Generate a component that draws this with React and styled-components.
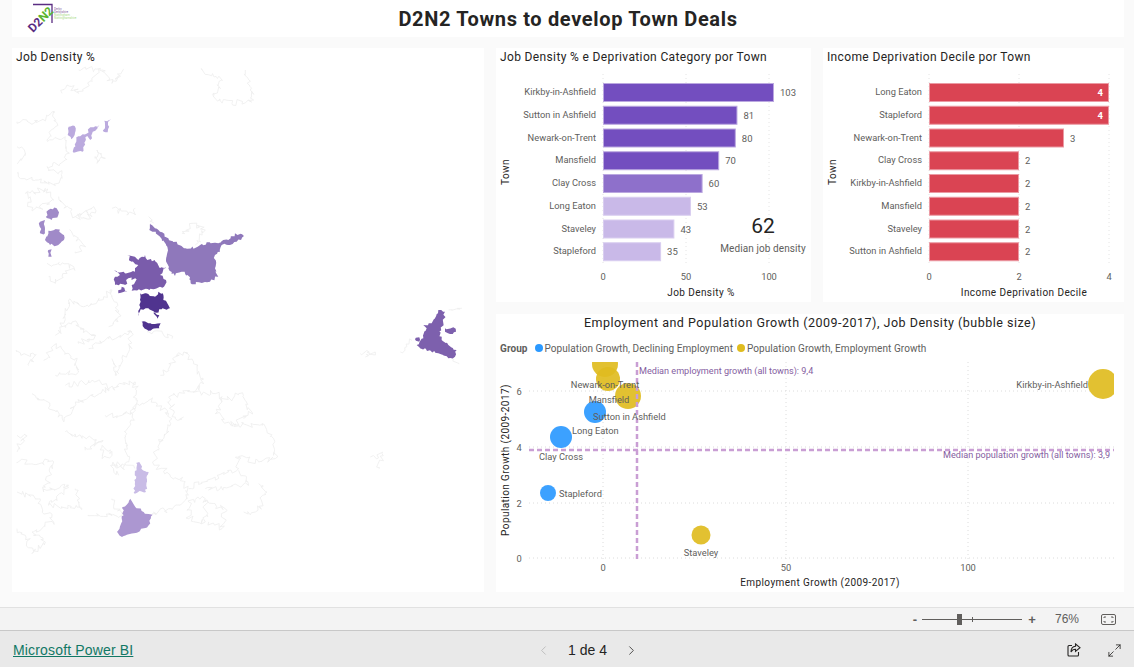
import { createGlobalStyle } from 'styled-components'
import styled from 'styled-components'
import { ChevronLeft, ChevronRight, Maximize2 } from 'lucide-react'

const chartFont = `Roboto, "Liberation Sans", sans-serif`
const uiFont = `"Liberation Sans", Arial, sans-serif`

/**
 * Chart data
 */
const jobDensity = [
  { town: 'Kirkby-in-Ashfield', value: 103, fill: '#734ebf', edge: '#bba8e0' },
  { town: 'Sutton in Ashfield', value: 81, fill: '#734ebf', edge: '#bba8e0' },
  { town: 'Newark-on-Trent', value: 80, fill: '#734ebf', edge: '#bba8e0' },
  { town: 'Mansfield', value: 70, fill: '#734ebf', edge: '#bba8e0' },
  { town: 'Clay Cross', value: 60, fill: '#8e70cb', edge: '#bba8e0' },
  { town: 'Long Eaton', value: 53, fill: '#c9b9e8', edge: '#d9cef0' },
  { town: 'Staveley', value: 43, fill: '#c9b9e8', edge: '#d9cef0' },
  { town: 'Stapleford', value: 35, fill: '#c9b9e8', edge: '#d9cef0' },
]

const incomeDecile = [
  { town: 'Long Eaton', value: 4 },
  { town: 'Stapleford', value: 4 },
  { town: 'Newark-on-Trent', value: 3 },
  { town: 'Clay Cross', value: 2 },
  { town: 'Kirkby-in-Ashfield', value: 2 },
  { town: 'Mansfield', value: 2 },
  { town: 'Staveley', value: 2 },
  { town: 'Sutton in Ashfield', value: 2 },
].map((d) => ({ ...d, fill: '#da4453', edge: '#eb9aa3' }))

const BLUE = '#2b99ff'
const GOLD = '#dfbc1f'

const bubbles = [
  { x: 605, y: 364, r: 13, fill: GOLD },
  { x: 608, y: 379, r: 12, fill: GOLD },
  { x: 628, y: 396, r: 13, fill: GOLD },
  { x: 595, y: 412, r: 11, fill: BLUE },
  { x: 561, y: 437, r: 11, fill: BLUE },
  { x: 548, y: 493, r: 8, fill: BLUE },
  { x: 701, y: 535, r: 9.5, fill: GOLD },
  { x: 1103, y: 384, r: 15, fill: GOLD },
]

const bubbleLabels = [
  { text: 'Newark-on-Trent', x: 605, y: 388, anchor: 'middle' },
  { text: 'Mansfield', x: 609, y: 403, anchor: 'middle' },
  { text: 'Sutton in Ashfield', x: 593, y: 420, anchor: 'start' },
  { text: 'Long Eaton', x: 572, y: 434, anchor: 'start' },
  { text: 'Clay Cross', x: 561, y: 460, anchor: 'middle' },
  { text: 'Stapleford', x: 559, y: 497, anchor: 'start' },
  { text: 'Staveley', x: 701, y: 556, anchor: 'middle' },
  { text: 'Kirkby-in-Ashfield', x: 1088, y: 388, anchor: 'end' },
]

/**
 * Map shapes, traced in 3x crop coordinates and jittered so the edges look like boundaries
 */
const TOP = [12, 60]
const BOTTOM = [12, 322]
const MID = [40, 190]
const EAST = [400, 290]

const regions = [
  { o: TOP, c: '#bbaade', p: [[185, 278], [193, 232], [222, 222], [235, 202], [262, 195], [250, 212], [240, 222], [235, 240], [226, 228], [219, 245], [212, 275]] },
  { o: TOP, c: '#bbaade', p: [[170, 200], [188, 198], [188, 225], [178, 238], [167, 225]] },
  { o: TOP, c: '#bbaade', p: [[277, 182], [297, 178], [288, 195], [287, 217], [275, 215]] },
  { o: MID, c: '#8f78bb', p: [[330, 100], [345, 115], [360, 125], [385, 145], [410, 155], [432, 175], [470, 172], [500, 157], [535, 160], [550, 150], [565, 150], [585, 130], [612, 138], [590, 155], [570, 165], [545, 165], [540, 185], [525, 195], [525, 235], [535, 260], [510, 275], [452, 280], [450, 262], [425, 245], [405, 258], [385, 235], [378, 210], [382, 170], [360, 140], [340, 125], [328, 120]] },
  { o: MID, c: '#7a5cab', p: [[262, 195], [275, 198], [295, 210], [315, 195], [322, 210], [345, 210], [360, 235], [378, 232], [360, 255], [378, 270], [372, 290], [340, 298], [275, 302], [275, 285], [290, 268], [265, 265], [255, 285], [225, 285], [225, 260], [240, 255], [222, 240], [255, 250], [285, 245], [295, 225], [275, 215]] },
  { o: MID, c: '#7a5cab', p: [[245, 290], [262, 305], [235, 310]] },
  { o: MID, c: '#50348f', p: [[300, 310], [325, 312], [345, 320], [355, 305], [368, 310], [370, 330], [385, 345], [390, 355], [365, 358], [350, 368], [325, 355], [302, 358], [295, 378], [298, 345], [302, 335]] },
  { o: MID, c: '#50348f', p: [[340, 368], [358, 376], [352, 386]] },
  { o: MID, c: '#50348f', p: [[305, 395], [325, 400], [345, 402], [362, 400], [358, 415], [325, 422], [308, 408]] },
  { o: MID, c: '#a08ac8', p: [[25, 122], [50, 118], [72, 135], [72, 150], [55, 165], [30, 165], [15, 150]] },
  { o: MID, c: '#a08ac8', p: [[25, 60], [50, 55], [55, 75], [35, 90], [18, 80]] },
  { o: MID, c: '#a08ac8', p: [[0, 95], [15, 90], [15, 130], [0, 130]] },
  { o: MID, c: '#a08ac8', p: [[25, 180], [35, 178], [35, 200], [25, 200]] },
  { o: EAST, c: '#7d60ad', p: [[115, 60], [135, 65], [130, 100], [118, 125], [125, 150], [145, 165], [170, 180], [165, 200], [145, 205], [115, 190], [60, 175], [50, 165], [70, 145], [80, 115], [70, 105], [95, 100]] },
  { o: EAST, c: '#7d60ad', p: [[135, 115], [160, 112], [168, 125], [150, 132], [135, 125]] },
  { o: EAST, c: '#7d60ad', p: [[45, 148], [58, 142], [58, 155]] },
  { o: BOTTOM, c: '#c9bce6', p: [[372, 423], [385, 425], [388, 440], [410, 450], [405, 480], [402, 510], [365, 512], [372, 470]] },
  { o: BOTTOM, c: '#ac97d1', p: [[355, 530], [370, 555], [395, 570], [422, 578], [410, 610], [385, 625], [330, 645], [315, 630], [335, 580], [333, 555]] },
]

const outlines = [
  { o: TOP, p: [[150, 100], [165, 75], [200, 100], [240, 65], [265, 25], [200, 30]] },
  { o: TOP, p: [[270, 30], [300, 70], [335, 28]] },
  { o: TOP, p: [[570, 30], [630, 60], [605, 110], [660, 130], [725, 120], [715, 90], [700, 30]] },
  { o: TOP, p: [[15, 185], [65, 190], [125, 155], [130, 200], [105, 240], [160, 230], [165, 300], [105, 320], [150, 340], [130, 375], [60, 360], [15, 340]] },
  { o: TOP, p: [[15, 260], [40, 280], [15, 310]] },
  { o: TOP, p: [[40, 400], [100, 385], [125, 420], [60, 450], [40, 400]] },
  { o: TOP, p: [[140, 410], [190, 470], [245, 440], [240, 470], [190, 470]] },
  { o: TOP, p: [[300, 445], [370, 465], [370, 445]] },
  { o: TOP, p: [[255, 270], [280, 295], [255, 310], [255, 270]] },
  { o: TOP, p: [[175, 510], [220, 560], [190, 575]] },
  { o: TOP, p: [[105, 610], [185, 620], [130, 670], [110, 650]] },
  { o: TOP, p: [[410, 470], [425, 490]] },
  { o: TOP, p: [[510, 520], [540, 490], [580, 510], [550, 555]] },
  { o: TOP, p: [[150, 800], [170, 720], [230, 740], [300, 690], [320, 770], [290, 800]] },
  { o: TOP, p: [[1310, 750], [1350, 745]] },
  { o: BOTTOM, p: [[130, 40], [180, 0], [250, 40], [200, 65]] },
  { o: BOTTOM, p: [[230, 80], [290, 50], [360, 30], [350, 90], [310, 160], [300, 110]] },
  { o: BOTTOM, p: [[95, 115], [125, 70], [190, 110], [200, 150], [130, 160]] },
  { o: BOTTOM, p: [[15, 90], [70, 100], [50, 130]] },
  { o: BOTTOM, p: [[405, 30], [450, 30], [480, 50]] },
  { o: BOTTOM, p: [[445, 160], [515, 90], [545, 120], [575, 185], [540, 210], [470, 225], [490, 290], [515, 285]] },
  { o: BOTTOM, p: [[160, 190], [260, 175], [290, 200], [370, 180], [370, 260], [420, 230], [480, 290], [430, 400], [430, 430], [520, 480], [525, 530], [470, 560], [420, 575]] },
  { o: BOTTOM, p: [[60, 215], [135, 265], [155, 300], [190, 240], [290, 200]] },
  { o: BOTTOM, p: [[280, 280], [330, 280], [370, 265], [340, 340], [350, 420], [300, 430], [320, 460]] },
  { o: BOTTOM, p: [[160, 330], [270, 360], [220, 385]] },
  { o: BOTTOM, p: [[270, 370], [300, 400], [270, 410], [270, 370]] },
  { o: BOTTOM, p: [[545, 210], [610, 215], [630, 240], [610, 275], [660, 310], [720, 270], [680, 215], [630, 240]] },
  { o: BOTTOM, p: [[660, 310], [750, 310], [785, 350], [790, 410], [740, 420], [675, 405], [680, 440], [600, 470], [530, 500]] },
  { o: BOTTOM, p: [[15, 340], [40, 340], [15, 390]] },
  { o: BOTTOM, p: [[15, 420], [125, 420], [95, 510], [170, 490], [110, 550], [210, 560], [190, 500]] },
  { o: BOTTOM, p: [[15, 510], [70, 530], [125, 600], [60, 630], [100, 660], [60, 695], [40, 640], [15, 620]] },
  { o: BOTTOM, p: [[230, 580], [330, 580], [300, 530]] },
  { o: BOTTOM, p: [[300, 430], [370, 440]] },
  { o: BOTTOM, p: [[530, 540], [580, 530], [580, 600], [530, 590], [530, 540]] },
  { o: BOTTOM, p: [[580, 500], [710, 490], [680, 445]] },
  { o: BOTTOM, p: [[580, 540], [640, 560], [630, 620], [590, 600]] },
  { o: BOTTOM, p: [[740, 485], [765, 510], [730, 570], [695, 570]] },
  { o: BOTTOM, p: [[1045, 95], [1090, 90], [1060, 105]] },
  { o: BOTTOM, p: [[1165, 90], [1200, 55]] },
  { o: BOTTOM, p: [[1075, 405], [1110, 395], [1100, 440]] },
  { o: BOTTOM, p: [[1320, 110], [1340, 125]] },
]

let seed = 7
const rand = () => {
  seed = (seed * 16807) % 2147483647
  return seed / 2147483647 - 0.5
}

// breaks every segment into short jittered steps
const roughen = (points, step, amount) => {
  const out = []
  points.forEach(([x, y], i) => {
    out.push([x, y])
    const next = points[i + 1]
    if (!next) return
    const count = Math.floor(Math.hypot(next[0] - x, next[1] - y) / step)
    for (let k = 1; k < count; k++) {
      out.push([
        x + ((next[0] - x) * k) / count + rand() * amount,
        y + ((next[1] - y) * k) / count + rand() * amount,
      ])
    }
  })
  return out
}

const toPath = (points, close) =>
  'M' + points.map(([x, y]) => `${x.toFixed(1)} ${y.toFixed(1)}`).join('L') + (close ? 'Z' : '')

const regionPaths = regions.map((r) => ({
  ...r,
  d: toPath(roughen([...r.p, r.p[0]], 6, 8), true),
}))
const outlinePaths = outlines.map((l) => ({ ...l, d: toPath(roughen(l.p, 6, 18), false) }))

/**
 * CSS for the page using styled.components
 */
const GlobalStyle = createGlobalStyle`
  html, body {
    margin: 0;
    padding: 0;
    background: #fafafa;
  }
`

const Page = styled.div`
  display: flex;
  flex-direction: column;
  width: 1134px;
  height: 667px;
  overflow: hidden;
  background: #fafafa;
`

const Report = styled.main`
  flex: 1;
  display: flex;
  flex-direction: column;
  gap: 11px;
  padding: 0 10px 14px 12px;
`

const Banner = styled.header`
  display: grid;
  grid-template-columns: 1fr auto 1fr;
  align-items: center;
  height: 37px;
  background: #fff;
`

const Title = styled.h1`
  margin: 0;
  font: 700 20px ${chartFont};
  letter-spacing: 0.65px;
  color: #252423;
`

const Board = styled.div`
  flex: 1;
  display: grid;
  grid-template-columns: 472px 315px 301px;
  grid-template-rows: 254px 278px;
  column-gap: 12px;
  row-gap: 12px;
`

const Card = styled.section`
  position: relative;
  display: flex;
  flex-direction: column;
  background: #fff;
  grid-row: ${(p) => p.$row || 'auto'};
  grid-column: ${(p) => p.$col || 'auto'};
`

const CardTitle = styled.h2`
  margin: 0;
  height: 18px;
  padding: 2px 0 0 ${(p) => p.$indent || 4}px;
  font: 400 12px/14px ${chartFont};
  letter-spacing: 0.36px;
  color: #252423;
`

const ScatterTitle = styled(CardTitle)`
  padding: 2px 0 0;
  text-align: center;
  font-size: 12.5px;
  letter-spacing: 0.5px;
`

const Legend = styled.div`
  display: flex;
  align-items: center;
  height: 16px;
  margin-top: 7px;
  padding-left: 4px;
  font: 400 10px ${chartFont};
  letter-spacing: 0.06px;
  color: #605e5c;
`

const LegendTitle = styled.strong`
  margin-right: 7px;
  font-weight: 700;
`

const LegendItem = styled.span`
  display: flex;
  align-items: center;
  gap: 2px;
  margin-right: 4px;
  white-space: nowrap;
  &::before {
    content: '';
    width: 8px;
    height: 8px;
    border-radius: 50%;
    background: ${(p) => p.$color};
  }
`

const ChartSvg = styled.svg`
  display: block;
  flex: none;
`

const MapSvg = styled.svg`
  display: block;
  flex: none;
`

const Tick = styled.text`
  font: 400 9.3px ${chartFont};
  fill: #605e5c;
`

const AxisTitle = styled.text`
  font: 400 10px ${chartFont};
  letter-spacing: 0.42px;
  fill: #252423;
`

const BarValue = styled.text`
  font: 400 9.5px ${chartFont};
  fill: ${(p) => p.$inside ? '#fff' : '#605e5c'};
  font-weight: ${(p) => p.$inside ? 700 : 400};
`

const RefLabel = styled.text`
  font: 400 9.1px ${chartFont};
  fill: #85609f;
`

const Kpi = styled.div`
  position: absolute;
  left: 222px;
  top: 166px;
  width: 90px;
  text-align: center;
  color: #252423;
`

const KpiValue = styled.div`
  font: 400 21px/24px ${chartFont};
`

const KpiLabel = styled.div`
  margin-top: 5px;
  font: 400 10px/12px ${chartFont};
  letter-spacing: 0.1px;
  color: #605e5c;
  white-space: nowrap;
`

const ZoomBar = styled.div`
  display: flex;
  align-items: center;
  justify-content: flex-end;
  height: 22px;
  padding-right: 18px;
  background: #f3f3f3;
  border-top: 1px solid #e1e1e1;
  border-bottom: 1px solid #c8c8c8;
  font: 400 12px ${uiFont};
  color: #605e5c;
`

const ZoomSign = styled.span`
  width: 10px;
  text-align: center;
  font: 700 13px ${uiFont};
  color: #605e5c;
`

const Slider = styled.div`
  position: relative;
  width: 100px;
  height: 1px;
  margin: 0 5px 0 2px;
  background: #605e5c;
`

const SliderThumb = styled.span`
  position: absolute;
  left: 35px;
  top: -5px;
  width: 5px;
  height: 11px;
  background: #605e5c;
`

const SliderMark = styled.span`
  position: absolute;
  left: 50px;
  top: -2px;
  width: 1px;
  height: 5px;
  background: #605e5c;
`

const ZoomValue = styled.span`
  margin: 0 22px 0 18px;
`

const Footer = styled.footer`
  display: grid;
  grid-template-columns: 1fr auto 1fr;
  align-items: center;
  height: 36px;
  padding: 2px 12px 0 13px;
  box-sizing: border-box;
  background: #e9e9e9;
`

const ReportLink = styled.a`
  font: 400 14px ${uiFont};
  letter-spacing: 0.16px;
  color: #117865;
  text-decoration: underline;
`

const Pager = styled.nav`
  display: flex;
  align-items: center;
  gap: 17px;
  margin-left: 40px;
  font: 400 14px ${uiFont};
  color: #252423;
`

const Actions = styled.div`
  display: flex;
  justify-content: flex-end;
  align-items: center;
  gap: 26px;
`

/**
 * Logo, drawn with real text for the lettering
 */
function Logo() {
  return (
    <svg width="70" height="37" viewBox="0 0 70 37">
      <path d="M21 4.5H40V23" fill="none" stroke="#5a2d82" strokeWidth="1.3" />
      <text transform="translate(21 33) rotate(-45)" fontFamily="Roboto, sans-serif" fontWeight="700" fontSize="12">
        <tspan fill="#5a2d82">D2</tspan>
        <tspan fill="#5cb531">N2</tspan>
      </text>
      <g fontFamily="Roboto, sans-serif" fontSize="3" opacity="0.75">
        <text x="42" y="9.5" fill="#5a2d82">Derby</text>
        <text x="42" y="12.5" fill="#5a2d82">Derbyshire</text>
        <text x="42" y="15.5" fill="#8ccf5a">Nottingham</text>
        <text x="42" y="18.5" fill="#8ccf5a">Nottinghamshire</text>
      </g>
    </svg>
  )
}

/**
 * Horizontal bar chart, drawn in page coordinates
 * @function BarChart
 * @returns (JSX)
 */
function BarChart({ data, left, width, x0, scale, ticks, axisTitle, axisCenter, townX, insideFrom }) {
  const top = 66
  return (
    <ChartSvg width={width} height={236} viewBox={`${left} ${top} ${width} 236`}>
      {ticks.map((t) => (
        <g key={t}>
          <line x1={x0 + t * scale} x2={x0 + t * scale} y1="74" y2="264" stroke="#e4e4e4" strokeDasharray="1 3" />
          <Tick x={x0 + t * scale} y="280" textAnchor="middle">{t}</Tick>
        </g>
      ))}
      {data.map((d, i) => {
        const y = 83 + i * 22.75
        const end = x0 + d.value * scale
        const inside = insideFrom && d.value >= insideFrom
        return (
          <g key={d.town}>
            <Tick x={x0 - 7} y={y + 12} textAnchor="end">{d.town}</Tick>
            <rect x={x0 + 0.5} y={y + 0.5} width={d.value * scale - 1} height="18" fill={d.fill} stroke={d.edge} />
            <BarValue $inside={inside} x={inside ? end - 6 : end + 6} y={y + 13} textAnchor={inside ? 'end' : 'start'}>
              {d.value}
            </BarValue>
          </g>
        )
      })}
      <AxisTitle x={axisCenter} y="296" textAnchor="middle">{axisTitle}</AxisTitle>
      <AxisTitle transform={`translate(${townX} 172) rotate(-90)`} textAnchor="middle">Town</AxisTitle>
    </ChartSvg>
  )
}

/**
 * Bubble chart, drawn in page coordinates
 * @function ScatterChart
 * @returns (JSX)
 */
function ScatterChart() {
  return (
    <ChartSvg width={628} height={236} viewBox="496 356 628 236">
      <defs>
        <clipPath id="plot">
          <rect x="519" y="362" width="595" height="200" />
        </clipPath>
      </defs>
      {[391, 447, 503, 558].map((y, i) => (
        <g key={y}>
          <line x1="529" x2="1114" y1={y} y2={y} stroke="#dcdcdc" strokeDasharray="1 3" />
          <Tick x="519" y={y + 4} textAnchor="middle">{6 - i * 2}</Tick>
        </g>
      ))}
      {[[603, 0], [786, 50], [968, 100]].map(([x, label]) => (
        <g key={x}>
          <line x1={x} x2={x} y1="362" y2="560" stroke="#dcdcdc" strokeDasharray="1 3" />
          <Tick x={x} y="571" textAnchor="middle">{label}</Tick>
        </g>
      ))}
      <g clipPath="url(#plot)">
        {bubbles.map((b) => (
          <circle key={`${b.x}-${b.y}`} cx={b.x} cy={b.y} r={b.r} fill={b.fill} fillOpacity="0.92" />
        ))}
        <line x1="637" x2="637" y1="362" y2="560" stroke="#c99ed4" strokeWidth="2.5" strokeDasharray="5 3" />
        <line x1="529" x2="1114" y1="450" y2="450" stroke="#c99ed4" strokeWidth="2.5" strokeDasharray="5 3" />
      </g>
      {bubbleLabels.map((l) => (
        <Tick key={l.text} x={l.x} y={l.y} textAnchor={l.anchor}>{l.text}</Tick>
      ))}
      <RefLabel x="639" y="374">Median employment growth (all towns): 9,4</RefLabel>
      <RefLabel x="1110" y="458" textAnchor="end">Median population growth (all towns): 3,9</RefLabel>
      <AxisTitle x="820" y="586" textAnchor="middle">Employment Growth (2009-2017)</AxisTitle>
      <AxisTitle transform="translate(509 460) rotate(-90)" textAnchor="middle">Population Growth (2009-2017)</AxisTitle>
    </ChartSvg>
  )
}

/**
 * Filled town map with the faint outlines of the other towns
 * @function TownMap
 * @returns (JSX)
 */
function TownMap() {
  return (
    <MapSvg width={472} height={526} viewBox="12 66 472 526">
      {outlinePaths.map((l, i) => (
        <path
          key={i}
          transform={`translate(${l.o[0]} ${l.o[1]}) scale(0.3333)`}
          d={l.d}
          fill="none"
          stroke="#efefef"
          strokeWidth="2.6"
        />
      ))}
      {regionPaths.map((r, i) => (
        <path key={i} transform={`translate(${r.o[0]} ${r.o[1]}) scale(0.3333)`} d={r.d} fill={r.c} />
      ))}
    </MapSvg>
  )
}

function FitIcon() {
  return (
    <svg width="15" height="11" viewBox="0 0 15 11" fill="none" stroke="#605e5c">
      <rect x="0.5" y="0.5" width="14" height="10" rx="1.5" />
      <path d="M3 4V3H5M10 3H12V4M12 7V8H10M5 8H3V7" />
    </svg>
  )
}

function ShareIcon() {
  return (
    <svg width="14" height="14" viewBox="0 0 14 14" fill="none" stroke="#252423" strokeWidth="1.1">
      <path d="M5 2.5H2A1 1 0 0 0 1 3.5V12A1 1 0 0 0 2 13H10.5A1 1 0 0 0 11.5 12V9" />
      <path d="M8.5 1L13 4.7L8.5 8.4V6.2C6.5 6.2 5 7 4 9C4 5.8 5.8 3.4 8.5 3.2Z" />
    </svg>
  )
}

/**
 * Component to render the report page
 * @function App
 * @returns (JSX)
 */
export default function App() {
  return (
    <Page>
      <GlobalStyle />
      <Report>
        <Banner>
          <Logo />
          <Title>D2N2 Towns to develop Town Deals</Title>
        </Banner>
        <Board>
          <Card $row="1 / 3">
            <CardTitle>Job Density %</CardTitle>
            <TownMap />
          </Card>
          <Card>
            <CardTitle>Job Density % e Deprivation Category por Town</CardTitle>
            <BarChart
              data={jobDensity}
              left={496}
              width={315}
              x0={603}
              scale={1.66}
              ticks={[0, 50, 100]}
              axisTitle="Job Density %"
              axisCenter={701}
              townX={509}
            />
            <Kpi>
              <KpiValue>62</KpiValue>
              <KpiLabel>Median job density</KpiLabel>
            </Kpi>
          </Card>
          <Card>
            <CardTitle>Income Deprivation Decile por Town</CardTitle>
            <BarChart
              data={incomeDecile}
              left={823}
              width={301}
              x0={929}
              scale={45}
              ticks={[0, 2, 4]}
              axisTitle="Income Deprivation Decile"
              axisCenter={1024}
              townX={836}
              insideFrom={4}
            />
          </Card>
          <Card $col="2 / 4">
            <ScatterTitle>Employment and Population Growth (2009-2017), Job Density (bubble size)</ScatterTitle>
            <Legend>
              <LegendTitle>Group</LegendTitle>
              <LegendItem $color={BLUE}>Population Growth, Declining Employment</LegendItem>
              <LegendItem $color={GOLD}>Population Growth, Employment Growth</LegendItem>
            </Legend>
            <ScatterChart />
          </Card>
        </Board>
      </Report>
      <ZoomBar>
        <ZoomSign>-</ZoomSign>
        <Slider>
          <SliderThumb />
          <SliderMark />
        </Slider>
        <ZoomSign>+</ZoomSign>
        <ZoomValue>76%</ZoomValue>
        <FitIcon />
      </ZoomBar>
      <Footer>
        <div>
          <ReportLink href="#">Microsoft Power BI</ReportLink>
        </div>
        <Pager>
          <ChevronLeft size={15} color="#b8b8b8" strokeWidth={1.4} />
          <span>1 de 4</span>
          <ChevronRight size={15} color="#3b3a39" strokeWidth={1.4} />
        </Pager>
        <Actions>
          <ShareIcon />
          <Maximize2 size={15} color="#252423" strokeWidth={1.3} />
        </Actions>
      </Footer>
    </Page>
  )
}
